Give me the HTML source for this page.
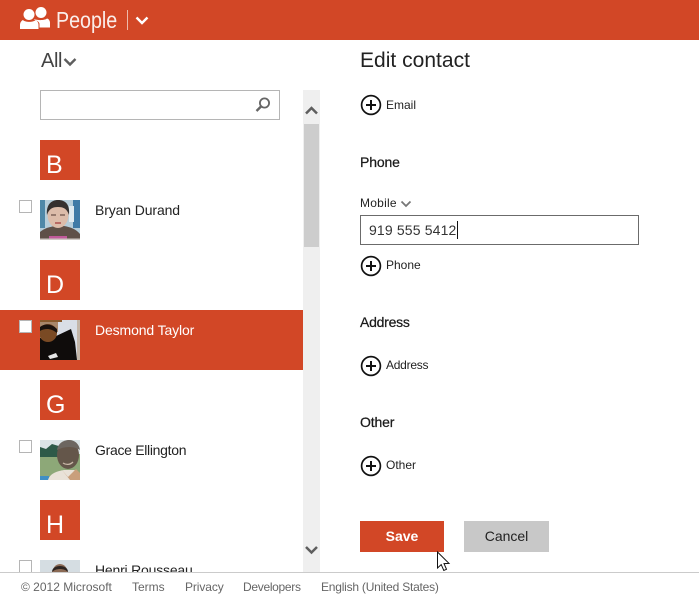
<!DOCTYPE html>
<html>
<head>
<meta charset="utf-8">
<style>
html,body{margin:0;padding:0;width:699px;height:611px;overflow:hidden;background:#fff}
body{position:relative;font-family:"Liberation Sans",sans-serif;color:#222}
.a{position:absolute;white-space:nowrap}
.tile{position:absolute;left:40px;width:40px;height:40px;background:#d24726;color:#fff;font-size:25px;line-height:50px;text-indent:6px}
.cb{position:absolute;left:19px;width:11px;height:11px;border:1px solid #b5b5b5;background:#fff}
.name{position:absolute;left:95px;font-size:14px;line-height:20px;color:#222;white-space:nowrap;letter-spacing:-.12px}
.av{position:absolute;left:40px;width:40px;height:40px;display:block}
.sec{position:absolute;left:360px;font-size:14px;line-height:20px;color:#1a1a1a;white-space:nowrap;-webkit-text-stroke:.25px #1a1a1a;letter-spacing:-.15px}
.lbl{position:absolute;left:386px;font-size:12px;line-height:16px;color:#222;white-space:nowrap}
.plus{position:absolute;left:360px;width:22px;height:22px;display:block}
.ft{position:absolute;top:579px;font-size:12px;line-height:16px;color:#666;white-space:nowrap}
</style>
</head>
<body>
<div class="a" style="left:0;top:0;width:699px;height:40px;background:#d24726"></div>
<svg class="a" style="left:20px;top:6px" width="31" height="24" viewBox="0 0 31 24">
<g fill="#fff">
<circle cx="21" cy="6.5" r="5.5"/>
<path d="M14 13 C17 14.5 25 14.5 27 12.5 C29 13 30 15 30 17 L30 21.5 L19.5 21.5 L19.5 18 C19.5 16 17 14.5 14 13.5 Z"/>
<circle cx="9" cy="8.5" r="5.5"/>
<path d="M3 14 C5 16.5 13.5 16.5 15.5 14 C17.5 15 18.5 17 18.5 19 L18.5 23 L0 23 L0 19 C0 17 1 15 3 14 Z"/>
</g>
</svg>
<div class="a" style="left:56px;top:5px;font-size:23px;line-height:30px;color:#fff;opacity:.9;transform:scaleX(.855);transform-origin:0 0">People</div>
<div class="a" style="left:127px;top:10px;width:1px;height:20px;background:#eeb9ab"></div>
<svg class="a" style="left:135px;top:15px" width="14" height="11" viewBox="0 0 14 11"><path d="M1.5 2.5 L7 8 L12.5 2.5" fill="none" stroke="#fff" stroke-width="2.4"/></svg>

<div class="a" style="left:41px;top:49px;font-size:20px;line-height:24px;color:#444;letter-spacing:-.4px">All</div>
<svg class="a" style="left:63px;top:57px" width="14" height="11" viewBox="0 0 14 11"><path d="M1.5 2 L7 7.5 L12.5 2" fill="none" stroke="#5e5e5e" stroke-width="2.4"/></svg>

<div class="a" style="left:40px;top:90px;width:238px;height:28px;border:1px solid #b5b5b5;background:#fff"></div>
<svg class="a" style="left:254px;top:96px" width="18" height="18" viewBox="0 0 18 18"><circle cx="10.5" cy="7" r="4.6" fill="none" stroke="#666" stroke-width="1.8"/><path d="M7 10.5 L2.5 15" stroke="#666" stroke-width="2.4"/></svg>

<!-- list -->
<div class="tile" style="top:140px">B</div>
<div class="cb" style="top:200px"></div>
<svg class="av" style="top:200px" viewBox="0 0 40 40">
<rect width="40" height="40" fill="#b5cdda"/>
<rect x="0" y="0" width="5" height="28" fill="#4f88a8"/>
<rect x="33" y="0" width="7" height="28" fill="#3f7aa6"/>
<rect x="29" y="6" width="5" height="16" fill="#dfeaf0"/>
<path d="M0 40 L0 32 C6 27 12 27 14 26 L24 26 C30 27 36 29 40 34 L40 40 Z" fill="#5f5048"/>
<ellipse cx="18" cy="15" rx="10.5" ry="13" fill="#dcbcaa"/>
<path d="M7 15 C6 5 11 0 18 0 C26 0 30 5 29 15 C27 9 24 7 18 7 C12 7 9 9 7 15 Z" fill="#34302f"/>
<path d="M11 15 h5 M20 15 h5" stroke="#6b534a" stroke-width="1.3"/>
<path d="M15 23 h6" stroke="#b86a64" stroke-width="2"/>
<rect x="9" y="36" width="18" height="2.5" fill="#c05a9a"/>
<rect x="0" y="38.5" width="40" height="1.5" fill="#cfc8c4"/>
</svg>
<div class="name" style="top:200px">Bryan Durand</div>

<div class="tile" style="top:260px">D</div>
<div class="a" style="left:0;top:310px;width:303px;height:60px;background:#d24726"></div>
<div class="cb" style="top:320px"></div>
<svg class="av" style="top:320px" viewBox="0 0 40 40">
<rect width="40" height="40" fill="#d9dee6"/>
<rect width="22" height="2" fill="#8a5a2c"/>
<rect x="0" y="2" width="18" height="10" fill="#a8876a"/>
<rect x="37" y="0" width="3" height="40" fill="#c3b6a8"/>
<path d="M0 40 L0 18 L14 17 L31 9 L35 22 L37 40 Z" fill="#0f0c0b"/>
<ellipse cx="8" cy="13" rx="9" ry="9" fill="#7a4a24"/>
<path d="M0 7 C5 3 12 4 17 9 L17 13 C11 8 5 8 0 11 Z" fill="#1b120d"/>
<path d="M8 36 L16 33 L18 37 L10 39 Z" fill="#e6e6e6"/>
</svg>
<div class="name" style="top:320px;color:#fff">Desmond Taylor</div>

<div class="tile" style="top:380px">G</div>
<div class="cb" style="top:440px"></div>
<svg class="av" style="top:440px" viewBox="0 0 40 40">
<rect width="40" height="14" fill="#dbe4e6"/>
<rect y="14" width="40" height="26" fill="#8da878"/>
<path d="M0 7 L6 9 L12 4 L22 7 L22 17 L0 17 Z" fill="#2e5a48"/>
<rect y="36" width="9" height="4" fill="#3f8fc4"/>
<path d="M8 40 C10 33 18 31 24 30 L34 30 C38 31 40 33 40 40 Z" fill="#e9e2d8"/>
<path d="M22 30 L28 37 L36 29 L40 33 L40 40 L30 40 Z" fill="#c99f7c"/>
<ellipse cx="28" cy="15" rx="11" ry="14" fill="#64564a"/>
<path d="M17 10 C18 3 24 0 29 0 C35 0 39 4 40 10 C34 6 24 6 17 10 Z" fill="#6c6660"/>
<path d="M23 23 C26 25 30 25 33 22" stroke="#c9b8a8" stroke-width="1.3" fill="none"/>
</svg>
<div class="name" style="top:440px;letter-spacing:-.3px">Grace Ellington</div>

<div class="tile" style="top:500px">H</div>
<div class="cb" style="top:560px"></div>
<svg class="av" style="top:560px" viewBox="0 0 40 40">
<rect width="40" height="40" fill="#d5dde2"/>
<ellipse cx="20" cy="14" rx="8" ry="10" fill="#8b6a55"/>
<path d="M12 12 C12 4 28 4 28 12 C24 8 16 8 12 12 Z" fill="#2d2421"/>
</svg>
<div class="name" style="top:560px;letter-spacing:-.2px">Henri Rousseau</div>

<!-- scrollbar -->
<div class="a" style="left:303px;top:90px;width:17px;height:482px;background:#efefef"></div>
<div class="a" style="left:304px;top:124px;width:15px;height:123px;background:#cdcdcd"></div>
<svg class="a" style="left:305px;top:105px" width="13" height="11" viewBox="0 0 13 11"><path d="M1 8.5 L6.5 3 L12 8.5" fill="none" stroke="#5e5e5e" stroke-width="2.5"/></svg>
<svg class="a" style="left:305px;top:545px" width="13" height="11" viewBox="0 0 13 11"><path d="M1 2 L6.5 7.5 L12 2" fill="none" stroke="#5e5e5e" stroke-width="2.5"/></svg>

<!-- right -->
<div class="a" style="left:360px;top:47px;font-size:21px;line-height:28px;color:#222;letter-spacing:.02px">Edit contact</div>

<svg class="plus" style="top:94px" viewBox="0 0 22 22"><circle cx="11" cy="11" r="9.4" fill="none" stroke="#111" stroke-width="1.7"/><path d="M11 6 V16 M6 11 H16" stroke="#111" stroke-width="2"/></svg>
<div class="lbl" style="top:97px">Email</div>

<div class="sec" style="top:152px">Phone</div>
<div class="a" style="left:360px;top:195px;font-size:12px;line-height:16px;color:#222;letter-spacing:.25px">Mobile</div>
<svg class="a" style="left:400px;top:199px" width="12" height="10" viewBox="0 0 12 10"><path d="M1.5 2.5 L6 7 L10.5 2.5" fill="none" stroke="#777" stroke-width="1.8"/></svg>
<div class="a" style="left:360px;top:215px;width:277px;height:28px;border:1px solid #6b6b6b;background:#fff"></div>
<div class="a" style="left:369px;top:221px;font-size:14px;line-height:18px;color:#333;letter-spacing:.15px">919 555 5412</div>
<div class="a" style="left:457px;top:221px;width:1px;height:18px;background:#111"></div>

<svg class="plus" style="top:255px" viewBox="0 0 22 22"><circle cx="11" cy="11" r="9.4" fill="none" stroke="#111" stroke-width="1.7"/><path d="M11 6 V16 M6 11 H16" stroke="#111" stroke-width="2"/></svg>
<div class="lbl" style="top:257px">Phone</div>

<div class="sec" style="top:312px;letter-spacing:-.25px">Address</div>
<svg class="plus" style="top:355px" viewBox="0 0 22 22"><circle cx="11" cy="11" r="9.4" fill="none" stroke="#111" stroke-width="1.7"/><path d="M11 6 V16 M6 11 H16" stroke="#111" stroke-width="2"/></svg>
<div class="lbl" style="top:357px;letter-spacing:-.25px">Address</div>

<div class="sec" style="top:412px">Other</div>
<svg class="plus" style="top:455px" viewBox="0 0 22 22"><circle cx="11" cy="11" r="9.4" fill="none" stroke="#111" stroke-width="1.7"/><path d="M11 6 V16 M6 11 H16" stroke="#111" stroke-width="2"/></svg>
<div class="lbl" style="top:457px">Other</div>

<div class="a" style="left:360px;top:521px;width:84px;height:31px;background:#d24726;color:#fff;font-size:14px;font-weight:bold;line-height:31px;text-align:center">Save</div>
<div class="a" style="left:464px;top:521px;width:85px;height:31px;background:#c8c8c8;color:#222;font-size:14px;line-height:31px;text-align:center">Cancel</div>

<!-- footer -->
<div class="a" style="left:0;top:572px;width:699px;height:39px;background:#fff;border-top:1px solid #cbcbcb;box-sizing:border-box"></div>
<div class="ft" style="left:21px">© 2012 Microsoft</div>
<div class="ft" style="left:132px">Terms</div>
<div class="ft" style="left:185px;letter-spacing:-.1px">Privacy</div>
<div class="ft" style="left:243px;letter-spacing:-.3px">Developers</div>
<div class="ft" style="left:321px;letter-spacing:-.22px">English (United States)</div>

<svg class="a" style="left:436px;top:551px" width="15" height="21" viewBox="0 0 15 21"><path d="M1.5 1 L1.5 17 L5.2 13.6 L7.8 19.5 L10.5 18.3 L8 12.6 L13 12.4 Z" fill="#fff" stroke="#111" stroke-width="1"/></svg>
</body>
</html>
